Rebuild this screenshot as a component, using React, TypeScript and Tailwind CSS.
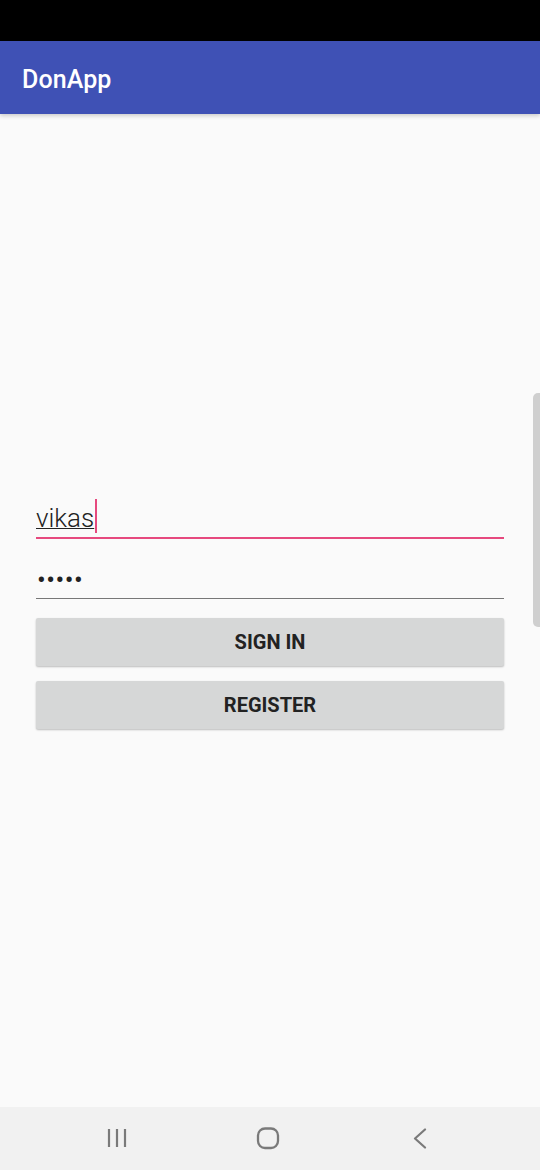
import React from 'react';

const roboto = { fontFamily: 'Roboto, "Liberation Sans", sans-serif' };

const App: React.FC = () => {
  return (
    <div className="flex flex-col w-[540px] h-[1170px] bg-[#fafafa] overflow-hidden relative" style={roboto}>
      {/* Status bar */}
      <div className="h-[41px] bg-black shrink-0" />

      {/* App bar */}
      <header className="h-[73px] shrink-0 bg-[#3f51b5] flex items-center pl-[22px] shadow-[0_2px_4px_rgba(0,0,0,0.18)] relative z-10">
        <h1 className="text-white text-[25px] font-medium leading-none tracking-[0.1px] pt-[3px]">DonApp</h1>
      </header>

      {/* Content */}
      <main className="flex-1 flex flex-col px-[36px] pt-[376px]">
        {/* Username */}
        <div className="h-[49px] flex items-end pb-[4px] border-b-2 border-[#e6497e]">
          <span className="text-[26px] font-light leading-[30px] text-[#222] underline decoration-1 underline-offset-[1px]">
            vikas
          </span>
          <span className="w-[2px] h-[34px] bg-[#e6497e] ml-[1px]" />
        </div>

        {/* Password */}
        <div className="h-[60px] flex items-end pb-[3px] border-b border-[#777]">
          <span className="text-[26px] leading-[30px] text-[#222] tracking-[0.5px] pl-[1px]">•••••</span>
        </div>

        {/* Buttons */}
        <button className="mt-[19px] h-[48px] w-full bg-[#d6d7d7] rounded-[2px] shadow-[0_1px_2px_rgba(0,0,0,0.25)] text-[20px] font-bold text-[#222] uppercase">
          Sign in
        </button>
        <button className="mt-[15px] h-[48px] w-full bg-[#d6d7d7] rounded-[2px] shadow-[0_1px_2px_rgba(0,0,0,0.25)] text-[20px] font-bold text-[#222] uppercase">
          Register
        </button>
      </main>

      {/* Edge panel handle */}
      <div className="absolute right-0 top-[393px] w-[7px] h-[234px] bg-[#cfcfcf] rounded-l-[5px]" />

      {/* Navigation bar */}
      <nav className="h-[63px] shrink-0 bg-[#f1f1f1] relative">
        <svg className="absolute left-[106px] top-[21px]" width="22" height="20" viewBox="0 0 22 20" fill="none" stroke="#7a7a7a" strokeWidth="2.2">
          <line x1="3" y1="1" x2="3" y2="19" />
          <line x1="11" y1="1" x2="11" y2="19" />
          <line x1="19" y1="1" x2="19" y2="19" />
        </svg>
        <svg className="absolute left-[256px] top-[20px]" width="24" height="23" viewBox="0 0 24 23" fill="none" stroke="#7a7a7a" strokeWidth="2.3">
          <rect x="2" y="1.5" width="20" height="19.5" rx="7" />
        </svg>
        <svg className="absolute left-[412px] top-[21px]" width="16" height="21" viewBox="0 0 16 21" fill="none" stroke="#7a7a7a" strokeWidth="2.2" strokeLinecap="round" strokeLinejoin="round">
          <polyline points="13,1.5 3,10.5 13,19.5" />
        </svg>
      </nav>
    </div>
  );
};

export default App;
